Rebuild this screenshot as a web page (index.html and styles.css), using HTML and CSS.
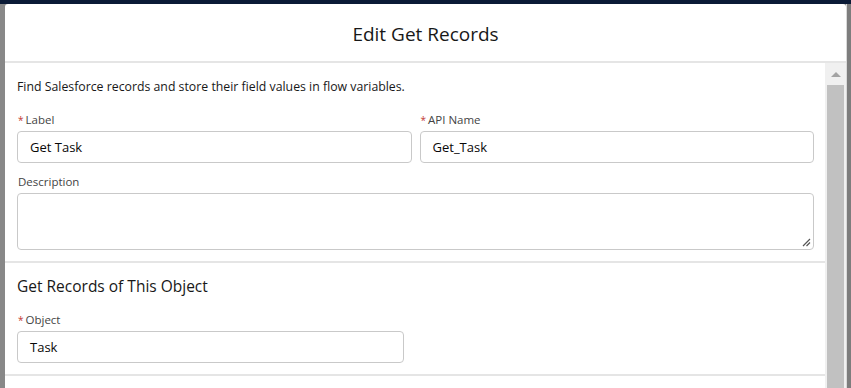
FILE: index.html
```html
<!DOCTYPE html>
<html>
<head>
<meta charset="utf-8">
<link rel="stylesheet" href="styles.css">
</head>
<body>
<div class="topbar"></div>
<div class="stage">
  <div class="side-left"></div>
  <div class="modal">
    <div class="modal-header"><h2 class="title">Edit Get Records</h2></div>
    <div class="modal-body">
      <div class="content">
        <section class="section">
          <p class="intro">Find Salesforce records and store their field values in flow variables.</p>
          <div class="row two">
            <div class="field">
              <label class="lbl"><span class="req">*</span>Label</label>
              <div class="input">Get Task</div>
            </div>
            <div class="field">
              <label class="lbl"><span class="req">*</span>API Name</label>
              <div class="input">Get_Task</div>
            </div>
          </div>
          <div class="field">
            <label class="lbl">Description</label>
            <div class="textarea">
              <svg class="grip" width="9" height="9" viewBox="0 0 9 9"><path d="M8 1 L1 8 M8 4.5 L4.5 8" stroke="#555" stroke-width="1.2" fill="none"/></svg>
            </div>
          </div>
        </section>
        <section class="section second">
          <h3 class="sub">Get Records of This Object</h3>
          <div class="field half">
            <label class="lbl"><span class="req">*</span>Object</label>
            <div class="input">Task</div>
          </div>
        </section>
        <div class="section third"></div>
      </div>
      <div class="scrollbar">
        <div class="arrow"></div>
        <div class="thumb"></div>
      </div>
    </div>
  </div>
  <div class="side-right"></div>
</div>
</body>
</html>
```
FILE: styles.css
```css
* { box-sizing: border-box; }
html, body { margin: 0; padding: 0; height: 100%; overflow: hidden; }
body {
  font-family: "Open Sans", "Noto Sans", sans-serif;
  background: #8a8a8a;
  color: #181818;
}
.topbar { height: 4px; background: #0a1a36; }
.stage { display: flex; height: 384px; }
.side-left { width: 5px; background: #888888; flex: none; }
.side-right { flex: none; width: 5px; background: #7d7d7d; border-left: 1px solid #d9d9d9; }
.modal {
  flex: 1;
  background: #fff;
  border-top-left-radius: 3px;
  border-top-right-radius: 3px;
  display: flex;
  flex-direction: column;
  overflow: hidden;
}
.modal-header {
  height: 59px;
  border-bottom: 2px solid #e5e5e5;
  display: flex;
  align-items: center;
  justify-content: center;
  flex: none;
}
.title {
  margin: 0;
  font-weight: 400;
  font-size: 19px;
  color: #181818;
  padding-top: 2px;
}
.modal-body { flex: 1; display: flex; min-height: 0; }
.content { flex: 1; }
.section {
  padding: 0 11px 11px 12px;
  border-bottom: 2px solid #e5e5e5;
}
.intro {
  margin: 0;
  padding-top: 15px;
  font-size: 12.3px;
  line-height: 18px;
  color: #181818;
}
.row.two {
  display: grid;
  grid-template-columns: 1fr 1fr;
  gap: 8px;
  margin-top: 16px;
}
.field { display: flex; flex-direction: column; }
.section > .field { margin-top: 11px; }
.lbl {
  font-size: 11.5px;
  line-height: 16px;
  color: #444444;
  margin-bottom: 3px;
  padding-left: 1px;
}
.req { color: #c23934; margin-right: 2px; font-size: 10px; }
.input {
  height: 32px;
  border: 1px solid #c9c9c9;
  border-radius: 4px;
  padding: 0 12px;
  font-size: 13px;
  line-height: 30px;
  color: #080707;
}
.textarea {
  height: 57px;
  border: 1px solid #c9c9c9;
  border-radius: 4px;
  position: relative;
}
.grip { position: absolute; right: 2px; bottom: 2px; }
.section.second { padding-top: 13px; }
.sub {
  margin: 0;
  font-size: 15.5px;
  font-weight: 400;
  line-height: 20px;
  color: #181818;
}
.section.second > .field { margin-top: 16px; }
.field.half { width: 387px; }
.section.third { border: none; }
.scrollbar {
  width: 21px;
  flex: none;
  background: #f0f0f0;
  display: flex;
  flex-direction: column;
  align-items: center;
  padding: 0 2px;
}
.arrow {
  width: 0; height: 0;
  margin-top: 9px;
  margin-bottom: 8px;
  border-left: 5px solid transparent;
  border-right: 5px solid transparent;
  border-bottom: 5px solid #a3a3a3;
}
.thumb { align-self: stretch; flex: 1; background: #c1c1c1; }
```
